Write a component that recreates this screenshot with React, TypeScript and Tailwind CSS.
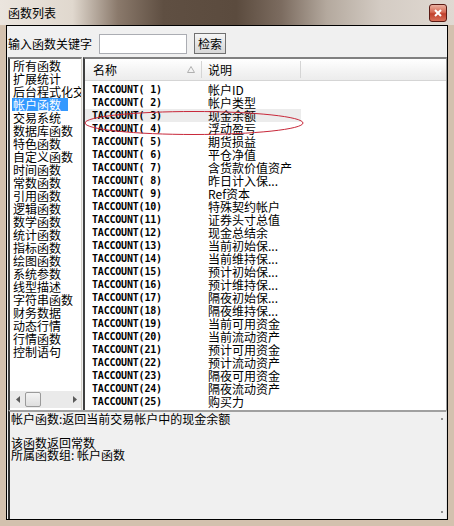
import React from "react";

const groups = [
  "所有函数",
  "扩展统计",
  "后台程式化交易",
  "帐户函数",
  "交易系统",
  "数据库函数",
  "特色函数",
  "自定义函数",
  "时间函数",
  "常数函数",
  "引用函数",
  "逻辑函数",
  "数学函数",
  "统计函数",
  "指标函数",
  "绘图函数",
  "系统参数",
  "线型描述",
  "字符串函数",
  "财务数据",
  "动态行情",
  "行情函数",
  "控制语句",
];

const descs = [
  "帐户ID",
  "帐户类型",
  "现金余额",
  "浮动盈亏",
  "期货损益",
  "平仓净值",
  "含货款价值资产",
  "昨日计入保...",
  "Ref资本",
  "特殊契约帐户",
  "证券头寸总值",
  "现金总结余",
  "当前初始保...",
  "当前维持保...",
  "预计初始保...",
  "预计维持保...",
  "隔夜初始保...",
  "隔夜维持保...",
  "当前可用资金",
  "当前流动资产",
  "预计可用资金",
  "预计流动资产",
  "隔夜可用资金",
  "隔夜流动资产",
  "购买力",
];

export default function App() {
  return (
    <div className="w-[454px] h-[526px] flex flex-col bg-[#d3c1ae] text-[12px] text-black font-['Noto_Sans_CJK_SC',sans-serif] overflow-hidden relative">
      {/* TITLE BAR */}
      <div className="h-[25px] shrink-0 flex items-center justify-between pl-[8px] pr-[7px] bg-[linear-gradient(90deg,#ebe5de_0%,#e0d8ce_16%,#8a796b_26%,#5f4f42_36%,#5b4b3e_52%,#7c6c60_62%,#b4a99e_72%,#d4ccc4_84%,#e0d9d2_100%)]">
        <span className="leading-none">函数列表</span>
        <div className="w-[18px] h-[18px] rounded-[3px] border border-[#5a1a14] bg-[linear-gradient(180deg,#eab0a0_0%,#d66a55_45%,#c0402c_55%,#d8705a_100%)] flex items-center justify-center">
          <svg width="8" height="8" viewBox="0 0 8 8">
            <path d="M1 1 L7 7 M7 1 L1 7" stroke="#fff" strokeWidth="2" />
          </svg>
        </div>
      </div>

      {/* CLIENT */}
      <div className="mx-[6px] mb-[6px] flex-1 border border-black bg-[#f0f0f0] flex flex-col">
        {/* SEARCH */}
        <div className="flex items-center pt-[7px] pl-[1px] h-[28px]">
          <span className="w-[84px] leading-none">输入函数关键字</span>
          <div className="ml-[7px] w-[88px] h-[20px] bg-white border border-[#abadb3]" />
          <div className="ml-[7px] w-[32px] h-[21px] border border-[#707070] bg-[linear-gradient(180deg,#f6f6f6_0%,#e4e4e4_50%,#d8d8d8_100%)] flex items-center justify-center leading-none">
            检索
          </div>
        </div>

        {/* LISTS */}
        <div className="mt-[3px] flex h-[353px] relative">
          {/* left list */}
          <div className="ml-[1px] w-[74px] h-full flex flex-col bg-white border-t-2 border-l-2 border-t-[#808080] border-l-[#404040] border-r border-r-[#d4d0c8] overflow-hidden">
            <div className="flex-1 pl-[2px] leading-[13px] overflow-hidden">
              {groups.map((g) =>
                g === "帐户函数" ? (
                  <div key={g} className="h-[13px] whitespace-nowrap">
                    <span className="inline-block bg-[#3399ff] text-white pl-[1px] pr-[7px]">{g}</span>
                  </div>
                ) : (
                  <div key={g} className="h-[13px] pl-[1px] whitespace-nowrap">
                    {g}
                  </div>
                )
              )}
            </div>
            {/* horizontal scrollbar */}
            <div className="h-[17px] mb-[2px] shrink-0 bg-[#eaeaea] flex items-center">
              <div className="w-[15px] flex justify-center">
                <svg width="4" height="7" viewBox="0 0 4 7">
                  <path d="M4 0 L0 3.5 L4 7 Z" fill="#5a5a5a" />
                </svg>
              </div>
              <div className="w-[16px] h-[15px] rounded-[2px] border border-[#9a9a9a] bg-[linear-gradient(180deg,#f4f4f4_0%,#dedede_100%)]" />
              <div className="flex-1 flex justify-end pr-[4px]">
                <svg width="4" height="7" viewBox="0 0 4 7">
                  <path d="M0 0 L4 3.5 L0 7 Z" fill="#5a5a5a" />
                </svg>
              </div>
            </div>
          </div>

          {/* right list view */}
          <div className="ml-[1px] flex-1 h-full flex flex-col bg-white border-t-2 border-l-2 border-t-[#808080] border-l-[#404040] border-r border-r-[#a0a0a0] overflow-hidden">
            <div className="h-[22px] shrink-0 flex bg-[linear-gradient(180deg,#ffffff_0%,#f3f3f3_60%,#ececec_100%)] border-b border-[#d5d5d5]">
              <div className="w-[117px] flex items-center justify-between pl-[8px] pr-[6px] border-r border-[#d5d5d5] my-[2px]">
                <span className="leading-none">名称</span>
                <svg width="8" height="7" viewBox="0 0 8 7">
                  <path d="M4 0.5 L7.5 6.5 L0.5 6.5 Z" fill="none" stroke="#b0b0b0" strokeWidth="1" />
                </svg>
              </div>
              <div className="w-[99px] flex items-center pl-[6px] border-r border-[#d5d5d5] my-[2px]">
                <span className="leading-none">说明</span>
              </div>
              <div className="flex-1" />
            </div>
            <div className="pt-[2px] leading-[13px]">
              {descs.map((d, i) => {
                const n = i + 1;
                const label = n < 10 ? `TACCOUNT( ${n})` : `TACCOUNT(${n})`;
                return (
                  <div key={n} className="h-[13px] flex whitespace-nowrap">
                    <div className={`w-[216px] flex ${n === 3 ? "bg-[#ececec]" : ""}`}>
                      <div className="w-[117px] pl-[7px] font-['DejaVu_Sans_Mono',monospace] text-[10px] font-bold tracking-[-0.2px]">
                        {label}
                      </div>
                      <div className="w-[99px] pl-[6px]">{d}</div>
                    </div>
                  </div>
                );
              })}
            </div>
          </div>

          {/* red marker ellipse */}
          <svg className="absolute left-[76px] top-[50px] pointer-events-none" width="224" height="30" viewBox="0 0 224 30">
            <ellipse cx="111" cy="16" rx="109" ry="11.5" fill="none" stroke="#c8283a" strokeWidth="1" />
          </svg>
        </div>

        {/* DESCRIPTION */}
        <div className="ml-[1px] flex-1 flex bg-[#f0f0f0] border-t-2 border-l-2 border-t-[#a0a0a0] border-l-[#303030] border-r border-r-[#e0e0e0]">
          <div className="flex-1 pl-[1px] pt-[1px] leading-[12px]">
            <div>帐户函数:返回当前交易帐户中的现金余额</div>
            <div className="h-[12px]" />
            <div>该函数返回常数</div>
            <div>所属函数组: 帐户函数</div>
          </div>
          <div className="w-[8px] flex flex-col justify-between items-center py-[6px]">
            <div className="w-[2px] h-[2px] bg-[#909090]" />
            <div className="w-[2px] h-[2px] bg-[#909090]" />
          </div>
        </div>
      </div>
    </div>
  );
}
